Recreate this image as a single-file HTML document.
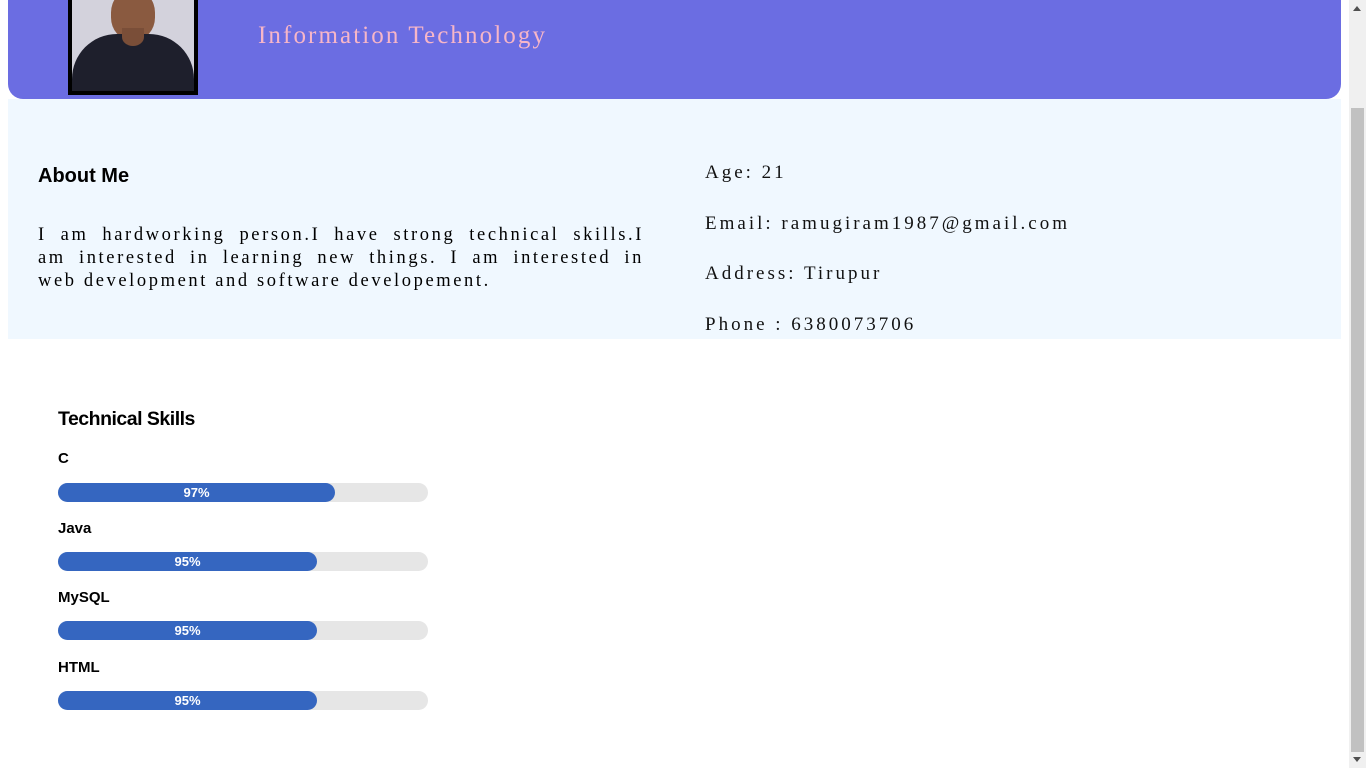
<!DOCTYPE html>
<html><head><meta charset="utf-8"><style>
html,body{margin:0;padding:0}
body{width:1366px;height:768px;position:relative;overflow:hidden;background:#fff;font-family:"Liberation Serif",serif}
.abs{position:absolute}
.hdr{left:8px;top:-20px;width:1333px;height:119px;background:#6b6de2;border-radius:0 0 15px 15px}
.photo{left:68px;top:-10px;width:122px;height:101px;border:4px solid #000;border-top:0;background:#d3d2dc;overflow:hidden}
.sec{left:8px;top:99px;width:1333px;height:240px;background:#f0f8ff}
.about p{margin:0;font-size:18.5px;letter-spacing:2.6px;text-align:justify;text-align-last:justify;line-height:23px;white-space:nowrap}
.r{font-size:19px;letter-spacing:3px;color:#111}
.sk{font-family:"Liberation Sans",sans-serif;font-weight:bold;color:#000}
.bar{left:58px;width:370px;height:19px;background:#e6e6e6;border-radius:10px}
.fill{height:19px;background:#3566c0;border-radius:10px;color:#fff;font-family:"Liberation Sans",sans-serif;font-weight:bold;font-size:13px;text-align:center;line-height:20px}
.sb{left:1349px;top:0;width:17px;height:768px;background:#f0f0f0}
</style></head><body>
<div class="abs hdr"></div>
<div class="abs" style="left:258px;top:-34px;font-size:30px;color:#f7b6c8;letter-spacing:2px">Ramu G, B.Tech</div>
<div class="abs" style="left:258px;top:22px;font-size:25px;color:#f7b6c8;letter-spacing:2.1px">Information Technology</div>
<div class="abs photo">
  <div class="abs" style="left:39px;top:0;width:44px;height:50px;background:#8a5a40;border-radius:45%"></div>
  <div class="abs" style="left:0;top:44px;width:122px;height:70px;background:#1e1f2c;border-radius:45px 45px 0 0"></div>
  <div class="abs" style="left:50px;top:38px;width:22px;height:18px;background:#7a4e38;border-radius:0 0 50% 50%"></div>
</div>
<div class="abs sec"></div>
<div class="abs sk" style="left:38px;top:165px;font-size:20px">About Me</div>
<div class="abs about" style="left:38px;top:224px;width:606px">
<p>I am hardworking person.I have strong technical skills.I</p>
<p>am interested in learning new things. I am interested in</p>
<p style="text-align-last:left">web development and software developement.</p>
</div>
<div class="abs r" style="left:705px;top:162px">Age: 21</div>
<div class="abs r" style="left:705px;top:213px">Email: ramugiram1987@gmail.com</div>
<div class="abs r" style="left:705px;top:263px">Address: Tirupur</div>
<div class="abs r" style="left:705px;top:314px">Phone : 6380073706</div>

<div class="abs sk" style="left:58px;top:408px;font-size:19.5px;letter-spacing:-0.5px">Technical Skills</div>
<div class="abs sk" style="left:58px;top:450px;font-size:15px">C</div>
<div class="abs bar" style="top:483px"><div class="fill" style="width:277px">97%</div></div>
<div class="abs sk" style="left:58px;top:520px;font-size:15px">Java</div>
<div class="abs bar" style="top:552px"><div class="fill" style="width:259px">95%</div></div>
<div class="abs sk" style="left:58px;top:589px;font-size:15px">MySQL</div>
<div class="abs bar" style="top:621px"><div class="fill" style="width:259px">95%</div></div>
<div class="abs sk" style="left:58px;top:659px;font-size:15px">HTML</div>
<div class="abs bar" style="top:691px"><div class="fill" style="width:259px">95%</div></div>

<div class="abs sb"></div>
<div class="abs" style="left:1351px;top:108px;width:13px;height:644px;background:#c1c1c1"></div>
<div class="abs" style="left:1353px;top:6px;width:0;height:0;border-left:4px solid transparent;border-right:4px solid transparent;border-bottom:5px solid #505050"></div>
<div class="abs" style="left:1353px;top:757px;width:0;height:0;border-left:4px solid transparent;border-right:4px solid transparent;border-top:5px solid #505050"></div>
</body></html>
